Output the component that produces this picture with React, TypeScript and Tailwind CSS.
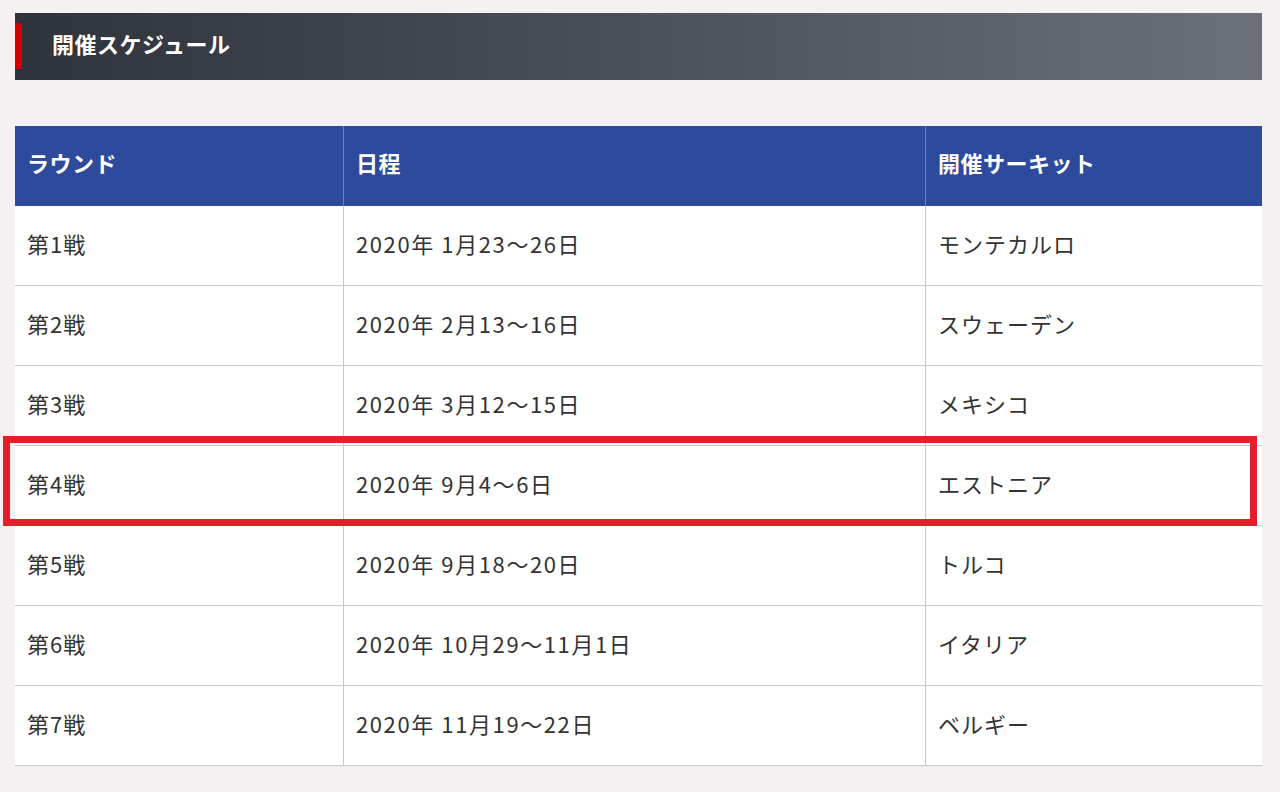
import React from "react";

const rows = [
  ["第1戦", "2020年 1月23〜26日", "モンテカルロ"],
  ["第2戦", "2020年 2月13〜16日", "スウェーデン"],
  ["第3戦", "2020年 3月12〜15日", "メキシコ"],
  ["第4戦", "2020年 9月4〜6日", "エストニア"],
  ["第5戦", "2020年 9月18〜20日", "トルコ"],
  ["第6戦", "2020年 10月29〜11月1日", "イタリア"],
  ["第7戦", "2020年 11月19〜22日", "ベルギー"],
];

export default function App() {
  return (
    <div
      className="w-[1280px] h-[792px] bg-[#f3f1f1] overflow-hidden pt-[13px] pl-[15px] pr-[18px]"
      style={{ fontFamily: '"Noto Sans CJK JP", "Noto Sans", sans-serif' }}
    >
      <div className="h-[67px] flex items-center bg-gradient-to-r from-[#2f333b] to-[#6b7079] relative">
        <div className="absolute left-0 top-[10px] w-[7px] h-[46px] bg-[#d40000]" />
        <span className="pl-[37px] pb-[7px] text-white font-bold text-[22px] leading-none tracking-[0.5px]">
          開催スケジュール
        </span>
      </div>

      <div className="mt-[46px] relative">
        <div className="grid grid-cols-[329px_582px_336px] bg-[#2e4a9c] text-white font-bold text-[22px] tracking-[0.5px] h-[80px]">
          <div className="flex items-center pl-[12px] pb-[7px] border-r border-[#6f80b8]">ラウンド</div>
          <div className="flex items-center pl-[12px] pb-[7px] border-r border-[#6f80b8]">日程</div>
          <div className="flex items-center pl-[12px] pb-[7px]">開催サーキット</div>
        </div>
        {rows.map((r, i) => (
          <div
            key={i}
            className="grid grid-cols-[329px_582px_336px] bg-white text-[#333] text-[22px] tracking-[1px] h-[80px] border-b border-[#c8c8c8]"
          >
            <div className="flex items-center pl-[12px] pb-[4px] border-r border-[#c8c8c8]">{r[0]}</div>
            <div className="flex items-center pl-[12px] pb-[4px] tracking-[1.6px] border-r border-[#c8c8c8]">{r[1]}</div>
            <div className="flex items-center pl-[12px] pb-[4px]">{r[2]}</div>
          </div>
        ))}
        <div className="absolute left-[-12px] top-[310px] w-[1254px] h-[90px] border-[7px] border-[#e3202a] pointer-events-none" />
      </div>
    </div>
  );
}
